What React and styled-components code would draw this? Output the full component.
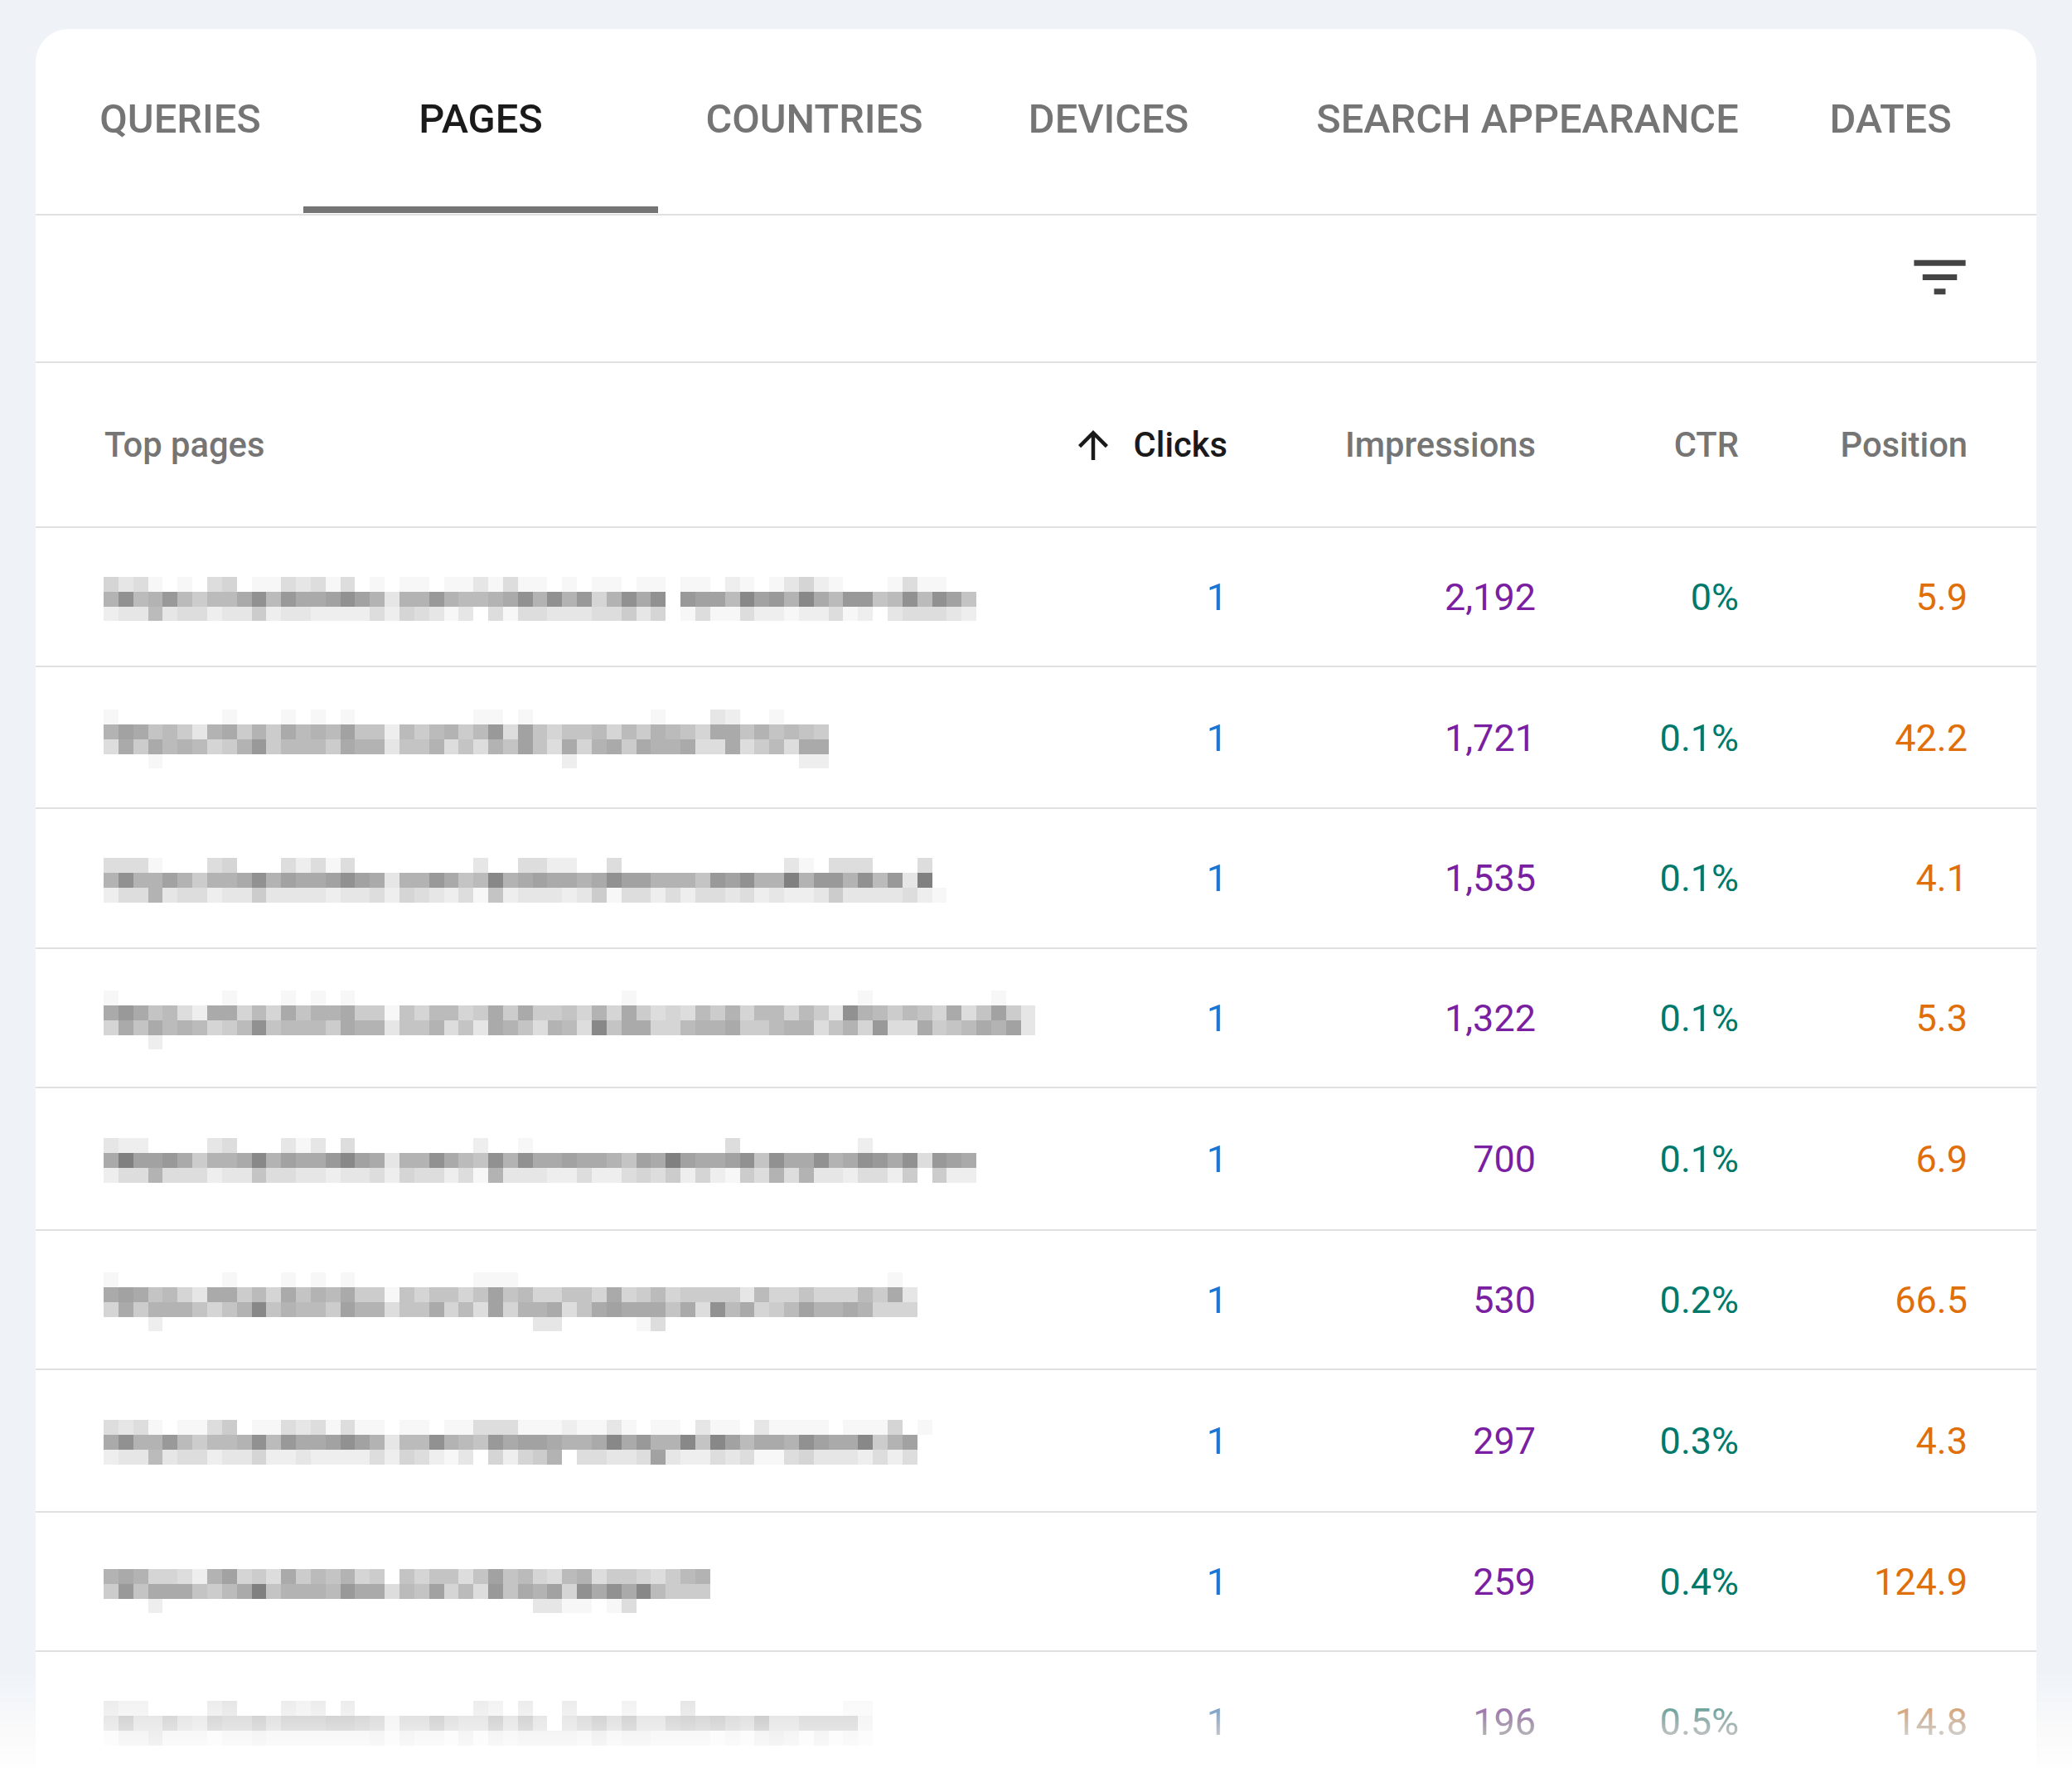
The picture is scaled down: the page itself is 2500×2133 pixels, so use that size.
import React from "react"
import styled, { createGlobalStyle } from "styled-components"

const CELL = 17.85

const GlobalStyle = createGlobalStyle`
  html, body {
    margin: 0;
    padding: 0;
    background: #fff;
  }
  * {
    box-sizing: border-box;
  }
`

const Page = styled.div`
  position: relative;
  width: 2500px;
  height: 2133px;
  overflow: hidden;
  padding: 35px 43px 0;
  background: #eff3f8;
  font-family: Roboto, "Liberation Sans", sans-serif;
`

const BottomFade = styled.div`
  position: absolute;
  left: 0;
  right: 0;
  bottom: 0;
  height: 117px;
  background: linear-gradient(rgba(255, 255, 255, 0), rgba(255, 255, 255, 0.92));
  pointer-events: none;

  &::before {
    content: "";
    position: absolute;
    inset: 0;
    backdrop-filter: grayscale(1);
    mask-image: linear-gradient(transparent 25%, #000 70%);
  }
`

const Card = styled.section`
  height: 100%;
  background: #fff;
  border-radius: 40px 40px 0 0;
  overflow: hidden;
`

const TabBar = styled.nav`
  display: flex;
  height: 225px;
  padding-left: 26px;
  border-bottom: 2px solid #e0e0e0;
`

const Tab = styled.div`
  display: flex;
  align-items: center;
  justify-content: center;
  width: ${(props) => props.$width}px;
  padding-top: 3px;
  border-bottom: 8px solid ${(props) => (props.$active ? "#757575" : "transparent")};
  margin-bottom: 1px;
  font-size: 48.7px;
  font-weight: 500;
  color: ${(props) => (props.$active ? "#1a1a1a" : "#757575")};
`

const Toolbar = styled.div`
  display: flex;
  justify-content: flex-end;
  height: 178px;
  padding: 33px 75px 0 0;
  border-bottom: 2px solid #e0e0e0;
`

const TableGrid = styled.div`
  display: grid;
  grid-template-columns: 1fr 200px 372px 245px 276px;
  align-items: center;
  padding: 0 83px;
  border-bottom: 2px solid #e0e0e0;
`

const HeaderRow = styled(TableGrid)`
  height: 199px;
`

const HeaderCell = styled.div`
  display: flex;
  align-items: center;
  justify-content: ${(props) => (props.$left ? "flex-start" : "flex-end")};
  gap: 22px;
  font-size: 41.7px;
  font-weight: 500;
  color: ${(props) => (props.$active ? "#1a1a1a" : "#757575")};
`

const Row = styled(TableGrid)`
  height: ${(props) => props.$height}px;
`

const Value = styled.div`
  padding-top: 1px;
  text-align: right;
  font-size: 45px;
  color: ${(props) => props.$color};
`

const MosaicSvg = styled.svg`
  display: block;
  margin: 5px 0 0 -1px;
`

const FilterIcon = () => (
  <svg width="83" height="83" viewBox="0 0 24 24" fill="#444">
    <path d="M10 18h4v-2h-4v2zM3 6v2h18V6H3zm3 7h12v-2H6v2z" />
  </svg>
)

const ArrowUp = () => (
  <svg width="54" height="54" viewBox="0 0 24 24" fill="#1a1a1a">
    <path d="M4 12l1.41 1.41L11 7.83V20h2V7.83l5.58 5.59L20 12l-8-8-8 8z" />
  </svg>
)

// sparse line of the mosaic: index -> level
const at = (cells) => {
  const max = Math.max(0, ...Object.keys(cells).map(Number))
  let line = ""
  for (let i = 0; i <= max; i++) line += cells[i] ? cells[i].toString(16) : "0"
  return line
}

const Mosaic = ({ lines }) => {
  const cols = Math.max(...lines.map((line) => line.length))
  return (
    <MosaicSvg
      width={cols * CELL}
      height={lines.length * CELL}
      viewBox={`0 0 ${cols * CELL} ${lines.length * CELL}`}
      shapeRendering="crispEdges"
    >
      {lines.map((line, y) =>
        line.split("").map((ch, x) => {
          const level = parseInt(ch, 16)
          if (!level) return null
          const g = Math.round(255 - level * 8.5)
          return (
            <rect
              key={`${y}-${x}`}
              x={x * CELL}
              y={y * CELL}
              width={CELL}
              height={CELL}
              fill={`rgb(${g},${g},${g})`}
            />
          )
        })
      )}
    </MosaicSvg>
  )
}

const tabs = [
  { label: "QUERIES", width: 297 },
  { label: "PAGES", width: 428, active: true },
  { label: "COUNTRIES", width: 377 },
  { label: "DEVICES", width: 333 },
  { label: "SEARCH APPEARANCE", width: 678 },
  { label: "DATES", width: 198 },
]

const rows = [
  {
    h: 168,
    impressions: "2,192",
    ctr: "0%",
    position: "5.9",
    blur: [
      "5341010450114341401.110113141101011011.11021013521000141100",
      "9d89c8688ad8caabdb9399c9889ad9d9c59dad.cbb8ebc9ea8cc78d8db7",
      "23383442336233222242543130414433344635.14114221224120344432",
    ],
  },
  {
    h: 171,
    impressions: "1,721",
    ctr: "0.1%",
    position: "42.2",
    blur: [
      at({ 0: 1, 8: 1, 12: 1, 14: 1, 16: 1, 25: 1, 26: 1, 28: 1, 37: 1, 41: 3, 42: 2, 45: 1 }),
      "9ba78639a696a898b772868968c4b757785869875aa797876",
      "4a6a898569c68886a99377947497b74a59a6a99a44a4684aa",
      at({ 3: 1, 31: 2, 47: 2, 48: 2 }),
    ],
  },
  {
    h: 168.5,
    impressions: "1,535",
    ctr: "0.1%",
    position: "4.1",
    blur: [
      at({ 0: 4, 1: 4, 2: 4, 3: 1, 7: 4, 8: 5, 12: 4, 13: 2, 14: 4, 15: 1, 16: 4, 25: 3, 28: 4, 29: 4, 30: 2, 31: 2, 34: 4, 46: 3, 47: 1, 49: 4, 50: 4, 51: 4, 55: 4 }),
      "9d99b9699ad9baabdba399ca78e9abaa9adbb9997cbd99f9cc9d8c3f0",
      "2449344233633332334" + "2" + "5432417233323614424244342322363333421",
    ],
  },
  {
    h: 168.5,
    impressions: "1,322",
    ctr: "0.1%",
    position: "5.3",
    blur: [
      at({ 0: 1, 8: 1, 12: 1, 14: 1, 16: 1, 35: 1, 51: 1, 60: 1 }),
      "aca7842aa585a799a66" + "1" + "758856a6a667595a64548695885863d986875a47b63",
      "5a7a898568d78886a99" + "3" + "779473a974984e7aa55899a668994795c44a678a9b3",
      at({ 3: 2 }),
    ],
  },
  {
    h: 171.5,
    impressions: "700",
    ctr: "0.1%",
    position: "6.9",
    blur: [
      at({ 0: 3, 1: 2, 2: 2, 7: 3, 8: 4, 12: 3, 13: 1, 14: 3, 16: 4, 25: 2, 28: 1, 42: 4, 51: 2 }),
      "afbbca699ae9baaceba" + "3" + "99da87d9daabaa97bafbaabd7daad9adcad4cba",
      "2449444233744332334" + "2" + "544241933322422454625216494933244260622",
    ],
  },
  {
    h: 168.5,
    impressions: "530",
    ctr: "0.2%",
    position: "66.5",
    blur: [
      at({ 0: 1, 8: 1, 12: 1, 14: 1, 16: 1, 25: 1, 26: 1, 27: 1, 53: 1 }),
      "aba7853aa685a798a66" + "1" + "757757b7855775a568566663855755586a3",
      "5a69997579e79886b99" + "4" + "77a584b599a47abaaa7a4d8a568b99a9555",
      at({ 3: 2, 29: 3, 30: 3, 36: 1, 37: 4 }),
    ],
  },
  {
    h: 171.5,
    impressions: "297",
    ctr: "0.3%",
    position: "4.3",
    blur: [
      "4341011460114341411" + "0" + "110114441112113101103110311110111501",
      "ad99c86889d8caabdb9" + "3" + "88d987cabba99aeac99e7eb8aa9dbaae69b0",
      "2338344233522322224" + "2" + "54213052569044334b32243411453332424",
    ],
  },
  {
    h: 168.5,
    impressions: "259",
    ctr: "0.4%",
    position: "124.9",
    blur: [
      at({}),
      "9a955429b564a687956" + "0" + "757747b78548946654689",
      "6c7aaa768af79998caa" + "4" + "87b584c7a9b5dadae8666",
      at({ 3: 2, 29: 3, 30: 3, 31: 1, 32: 1, 34: 1, 35: 4 }),
    ],
  },
  {
    h: 169.5,
    impressions: "196",
    ctr: "0.5%",
    position: "14.8",
    blur: [
      at({ 0: 3, 1: 2, 2: 2, 7: 3, 8: 4, 12: 3, 13: 2, 14: 3, 16: 3, 25: 3, 26: 2, 28: 3, 31: 3, 35: 2, 39: 4, 50: 1, 51: 1 }),
      "5955854877968889987" + "2" + "6696559595.579695589" + "8976a5577772",
      "1335222122322222223" + "1" + "32213132333324233222212134313121",
    ],
  },
]

const App = () => (
  <Page>
    <GlobalStyle />
    <Card>
      <TabBar>
        {tabs.map((tab) => (
          <Tab key={tab.label} $width={tab.width} $active={tab.active}>
            {tab.label}
          </Tab>
        ))}
      </TabBar>
      <Toolbar>
        <FilterIcon />
      </Toolbar>
      <HeaderRow>
        <HeaderCell $left>Top pages</HeaderCell>
        <HeaderCell $active>
          <ArrowUp />
          Clicks
        </HeaderCell>
        <HeaderCell>Impressions</HeaderCell>
        <HeaderCell>CTR</HeaderCell>
        <HeaderCell>Position</HeaderCell>
      </HeaderRow>
      {rows.map((row) => (
        <Row key={row.impressions} $height={row.h}>
          <Mosaic lines={row.blur} />
          <Value $color="#1976d2">1</Value>
          <Value $color="#7b1fa2">{row.impressions}</Value>
          <Value $color="#00796b">{row.ctr}</Value>
          <Value $color="#e06f0a">{row.position}</Value>
        </Row>
      ))}
    </Card>
    <BottomFade />
  </Page>
)

export default App
